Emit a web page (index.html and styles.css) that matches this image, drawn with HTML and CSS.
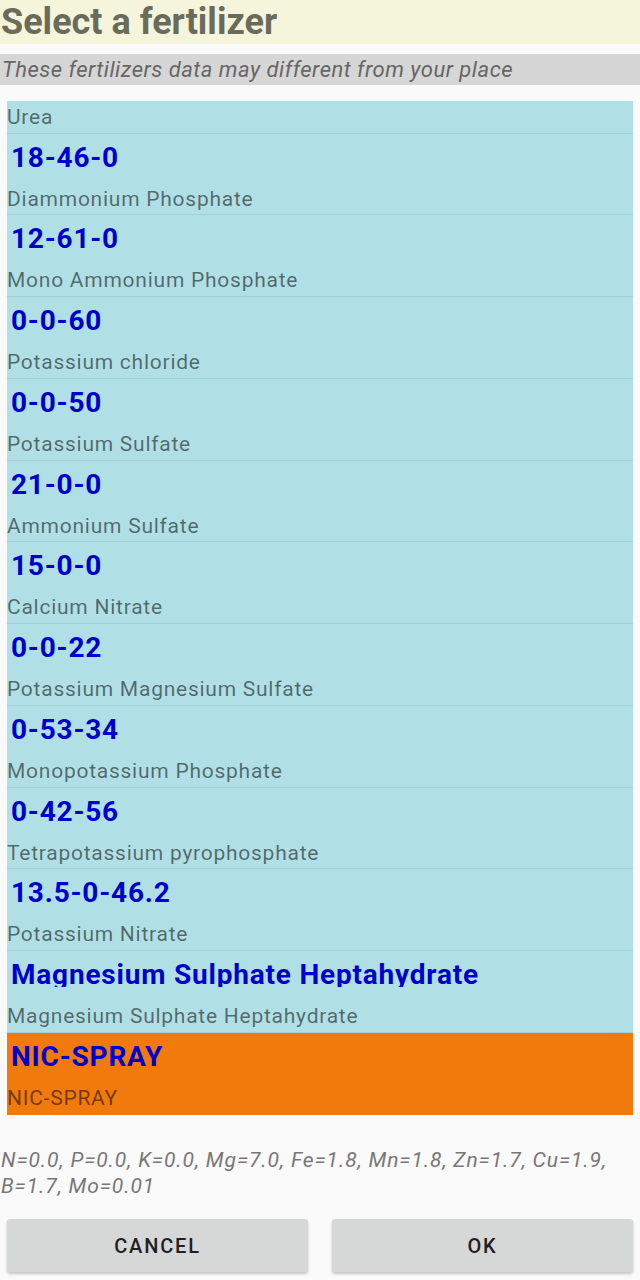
FILE: index.html
```html
<!DOCTYPE html>
<html>
<head>
<meta charset="utf-8">
<link rel="stylesheet" href="styles.css">
</head>
<body>
<div class="dialog">
  <div class="header"><h1 class="title">Select a fertilizer</h1></div>
  <div class="notice">These fertilizers data may different from your place</div>
  <div class="list">
    <div class="item partial"><div class="name">Urea</div></div>
    <div class="item"><div class="code">18-46-0</div><div class="name">Diammonium Phosphate</div></div>
    <div class="item"><div class="code">12-61-0</div><div class="name">Mono Ammonium Phosphate</div></div>
    <div class="item"><div class="code">0-0-60</div><div class="name">Potassium chloride</div></div>
    <div class="item"><div class="code">0-0-50</div><div class="name">Potassium Sulfate</div></div>
    <div class="item"><div class="code">21-0-0</div><div class="name">Ammonium Sulfate</div></div>
    <div class="item"><div class="code">15-0-0</div><div class="name">Calcium Nitrate</div></div>
    <div class="item"><div class="code">0-0-22</div><div class="name">Potassium Magnesium Sulfate</div></div>
    <div class="item"><div class="code">0-53-34</div><div class="name">Monopotassium Phosphate</div></div>
    <div class="item"><div class="code">0-42-56</div><div class="name">Tetrapotassium pyrophosphate</div></div>
    <div class="item"><div class="code">13.5-0-46.2</div><div class="name">Potassium Nitrate</div></div>
    <div class="item"><div class="code clipped">Magnesium Sulphate Heptahydrate</div><div class="name">Magnesium Sulphate Heptahydrate</div></div>
    <div class="item selected"><div class="code">NIC-SPRAY</div><div class="name">NIC-SPRAY</div></div>
  </div>
  <p class="details">N=0.0, P=0.0, K=0.0, Mg=7.0, Fe=1.8, Mn=1.8, Zn=1.7, Cu=1.9, B=1.7, Mo=0.01</p>
  <div class="buttons">
    <button class="btn">CANCEL</button>
    <button class="btn">OK</button>
  </div>
</div>
</body>
</html>
```
FILE: styles.css
```css
* { box-sizing: border-box; }
html, body { margin: 0; padding: 0; }
body {
  background: #fafafa;
  font-family: Roboto, "Liberation Sans", sans-serif;
  width: 640px;
  height: 1280px;
  overflow: hidden;
}
.header {
  background: #f5f5dc;
  height: 44px;
  overflow: hidden;
}
.title {
  margin: 0;
  padding: 0 0 0 1px;
  font-size: 36px;
  font-weight: 700;
  line-height: 44px;
  color: #6b6b5c;
}
.notice {
  margin-top: 10px;
  background: #d6d6d6;
  height: 31px;
  line-height: 31px;
  padding-left: 2px;
  font-size: 22px;
  letter-spacing: 0.5px;
  font-style: italic;
  color: #666666;
  white-space: nowrap;
}
.list {
  margin: 16px 7px 0 7px;
  height: 1014px;
  overflow: hidden;
  background: #b0e0e6;
}
.item {
  height: 81.75px;
  border-bottom: 1px solid rgba(0, 0, 0, 0.07);
}
.item.partial { height: 32.7px; }
.item.partial .name { padding-top: 3px; }
.item.selected { background: #f27a0c; border-bottom: none; }
.code {
  height: 36px;
  padding: 11px 0 0 4px;
  font-size: 28px;
  letter-spacing: 0.8px;
  font-weight: 700;
  line-height: 25px;
  color: #0000cd;
  white-space: nowrap;
}
.code.clipped { overflow: hidden; }
.name {
  padding-top: 16px;
  font-size: 21px;
  letter-spacing: 0.75px;
  line-height: 26px;
  color: rgba(0, 0, 0, 0.54);
  white-space: nowrap;
}
.details {
  margin: 32px 0 0 0;
  padding: 0 1px;
  font-size: 21px;
  letter-spacing: 0.9px;
  line-height: 26px;
  font-style: italic;
  color: #777777;
}
.buttons {
  margin: 20px 7px 0 7px;
  display: flex;
  gap: 24px;
}
.btn {
  flex: 1;
  height: 53px;
  border: none;
  border-radius: 3px;
  background: #d6d7d7;
  box-shadow: 0 2px 3px rgba(0, 0, 0, 0.22);
  font-family: Roboto, "Liberation Sans", sans-serif;
  font-weight: 500;
  font-size: 20px;
  letter-spacing: 1.8px;
  color: #1f1f1f;
}
```
